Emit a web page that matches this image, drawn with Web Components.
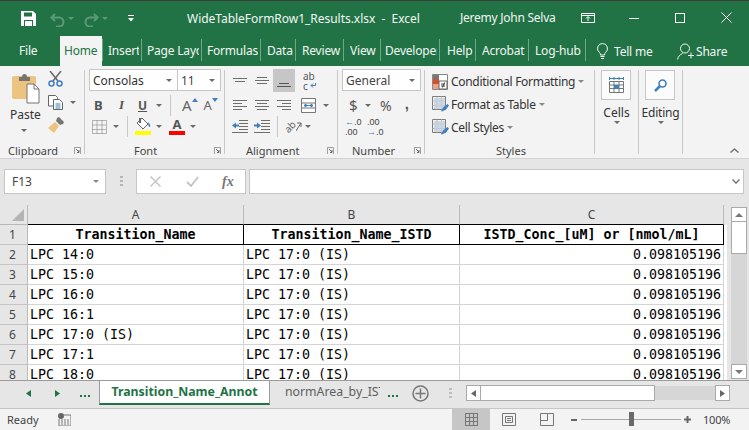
<!DOCTYPE html>
<html>
<head>
<meta charset="utf-8">
<style>
html, body { margin: 0; height: 430px; overflow: hidden; background: #f3f3f3; font-family: "Noto Sans", sans-serif; }
body { width: 749px; display: flex; flex-direction: column; }
</style>
</head>
<body>
<xl-titlebar></xl-titlebar>
<xl-tabstrip>
  <xl-tab w="60" pad="19" plain>File</xl-tab>
  <xl-tab w="42" pad="4" active>Home</xl-tab>
  <xl-tab w="40" pad="6">Insert</xl-tab>
  <xl-tab w="60" pad="5">Page Layout</xl-tab>
  <xl-tab w="59" pad="5">Formulas</xl-tab>
  <xl-tab w="35" pad="6">Data</xl-tab>
  <xl-tab w="48" pad="6">Review</xl-tab>
  <xl-tab w="37" pad="6">View</xl-tab>
  <xl-tab w="59" pad="4">Developer</xl-tab>
  <xl-tab w="36" pad="7">Help</xl-tab>
  <xl-tab w="53" pad="6">Acrobat</xl-tab>
  <xl-tab w="57" pad="6">Log-hub</xl-tab>
</xl-tabstrip>
<xl-ribbon></xl-ribbon>
<xl-formulabar></xl-formulabar>
<xl-sheet></xl-sheet>
<xl-sheettabs></xl-sheettabs>
<xl-statusbar></xl-statusbar>

<script>
// small icon set, everything drawn on its own box size
const svg = (w, h, body, extra = '') =>
  `<svg width="${w}" height="${h}" viewBox="0 0 ${w} ${h}" style="flex:none;display:block;${extra}">${body}</svg>`;
const caret = (ml = 0, c = '#6a6a6a') => svg(6, 3, `<path d="M0 0h6L3 3z" fill="${c}"/>`, `margin-left:${ml}px`);
const lines = (rows, c = '#6e6e6e') => rows.map(([x, y, w]) => `<rect x="${x}" y="${y}" width="${w}" height="1" fill="${c}"/>`).join('');
const launcher = svg(7, 7, '<path d="M0 .5h6.500V7M.5 0v7" fill="none" stroke="#a0a0a0"/><path d="M2 2l3 3M5 3v2.500H3" fill="none" stroke="#666"/>');

class Base extends HTMLElement {
  constructor() {
    super();
    this.attachShadow({ mode: 'open' });
  }
  render(css, html) {
    this.shadowRoot.innerHTML = `<style>${css}</style>${html}`;
  }
}

class XlTitlebar extends Base {
  constructor() {
    super();
    const undo = '<path d="M5 2L1.500 5.500 5 9M2 5.500h7a4.500 4.500 0 0 1 0 9H6" fill="none" stroke="#5b9a78" stroke-width="2"/>';
    const redo = '<path d="M10 2l3.500 3.500L10 9M13 5.500H6a4.500 4.500 0 0 0 0 9h3" fill="none" stroke="#5b9a78" stroke-width="2"/>';
    this.render(`
      :host { display: flex; flex: none; height: 36px; background: #217346; color: #f2f7f4; font-size: 12px; align-items: center; position: relative; box-sizing: border-box; border-top: 1px solid #3c3c3c; padding-left: 21px; }
      .t { white-space: pre; }
    `, `
      ${svg(15, 15, '<path d="M0 0h12l3 3v12H0z" fill="#fff"/><path d="M3 1.500h8v4H3zM3 9h9v6H3z" fill="#217346"/><path d="M4 10h7v5H4z" fill="#fff"/>', 'margin-top:-1px')}
      ${svg(15, 15, undo, 'margin-left:14px;margin-top:1px')}
      ${caret(3, '#5b9a78')}
      ${svg(15, 15, redo, 'margin-left:10px;margin-top:1px')}
      ${caret(3, '#5b9a78')}
      ${svg(6, 7, '<rect width="6" height="1" fill="#fff"/><path d="M0 3h6L3 6.500z" fill="#fff"/>', 'margin-left:20px')}
      <span class="t" style="margin-left:53px;width:273px;letter-spacing:-.03px">WideTableFormRow1_Results.xlsx  -  Excel</span>
      <span class="t" style="width:121px;letter-spacing:-.25px;margin-top:-2px">Jeremy John Selva</span>
      ${svg(14, 10, '<path d="M.5.500h13v9H.5zM.5 2.500h13M7 8V4M5 5.500L7 3.500 9 5.500" fill="none" stroke="#fff"/>', 'margin-top:-2px')}
      ${svg(10, 1, '<rect width="10" height="1" fill="#fff"/>', 'margin-left:34px;margin-top:-1px')}
      ${svg(10, 10, '<rect x=".5" y=".5" width="9" height="9" fill="none" stroke="#fff"/>', 'margin-left:36px;margin-top:-2px')}
      ${svg(11, 11, '<path d="M.5.500l10 10M10.500.500l-10 10" stroke="#fff" fill="none"/>', 'margin-left:36px;margin-top:-3px')}
    `);
  }
}

class XlTab extends Base {
  constructor() {
    super();
    const w = this.getAttribute('w'), pad = this.getAttribute('pad');
    this.render(`
      :host { display: block; flex: none; width: ${w}px; height: 30px; box-sizing: border-box; padding-left: ${pad}px; font-size: 12px; letter-spacing: -.2px; line-height: 29px; color: #f2f7f4; position: relative; white-space: nowrap; }
      .clip { overflow: hidden; height: 30px; margin-right: 3px; }
      :host([active]) { background: #f3f3f3; color: #217346; }
      :host(:not([plain]):not([active]))::after, :host([active])::after { content: ""; position: absolute; right: 0; top: 3px; height: 22px; width: 1px; background: #6ea88a; }
      :host([plain])::after { display: none; }
      :host([active])::after { right: -1px; }
    `, `<div class="clip"><slot></slot></div>`);
  }
}

class XlTabstrip extends Base {
  constructor() {
    super();
    this.render(`
      :host { display: flex; flex: none; height: 30px; background: #217346; color: #f2f7f4; font-size: 12px; line-height: 29px; }
      .tell { display: flex; align-items: center; letter-spacing: -.2px; }
    `, `
      <slot></slot>
      <div class="tell">
        ${svg(11, 16, '<path d="M5.500.500a5 5 0 0 1 3 9c-.8.7-1 1.500-1 2.500h-4c0-1-.2-1.800-1-2.500a5 5 0 0 1 3-9zM3.500 13.500h4M4 15.500h3" fill="none" stroke="#f2f7f4"/>', 'margin-left:11px;margin-top:-1px')}
        <span style="margin-left:6px;width:63px">Tell me</span>
        ${svg(17, 17, '<circle cx="8" cy="5.500" r="4.500" fill="none" stroke="#f2f7f4"/><path d="M.5 16.500c.5-3 2.500-5 5-6M11 12.500h6M14 9.500v6" fill="none" stroke="#f2f7f4"/>', 'margin-top:1px')}
        <span style="margin-left:2px">Share</span>
      </div>
    `);
  }
}

class XlGroup extends Base {
  constructor() {
    super();
    const w = this.getAttribute('w'), label = this.getAttribute('label') || '';
    const lx = this.getAttribute('lx') || 0;
    this.render(`
      :host { display: flex; flex-direction: column; flex: none; width: ${w}px; height: 92px; box-sizing: border-box; position: relative; }
      :host::after { content: ""; position: absolute; right: 0; top: 4px; bottom: 4px; width: 1px; background: #c9c9c9; }
      .body { flex: 1; min-height: 0; }
      .foot { display: flex; align-items: center; height: 16px; font-size: 11px; color: #444; white-space: nowrap; }
      .lab { margin-left: ${lx}px; }
      .launch { margin-left: auto; margin-right: 4px; margin-top: 1px; }
    `, `<div class="body"><slot></slot></div>
      <div class="foot"><span class="lab">${label}</span>${this.hasAttribute('launch') ? `<span class="launch">${launcher}</span>` : ''}</div>`);
  }
}

class XlRibbon extends Base {
  constructor() {
    super();
    const blue = '#3f7fbf';
    const top = lines([[0, 0, 14], [2, 3, 10]]), mid = lines([[2, 0, 10], [0, 3, 14], [2, 6, 10]]);
    const left = lines([[0, 0, 14], [0, 3, 9], [0, 6, 14], [0, 9, 9]]);
    const center = lines([[0, 0, 14], [2, 3, 10], [0, 6, 14], [2, 9, 10]]);
    const right = lines([[0, 0, 14], [5, 3, 9], [0, 6, 14], [5, 9, 9]]);
    const indL = lines([[7, 0, 9], [7, 3, 9], [7, 6, 9], [7, 9, 9], [0, 12, 16]]) + `<path d="M0 5.500l4-3v2h3v2H4v2z" fill="${blue}"/>`;
    const indR = lines([[7, 0, 9], [7, 3, 9], [7, 6, 9], [7, 9, 9], [0, 12, 16]]) + `<path d="M7 5.500l-4-3v2H0v2h3v2z" fill="${blue}"/>`;
    const sheetIco = (accent) => `<path d="M.5.500h13v13H.5z" fill="#f4f4f4" stroke="#7d7d7d"/><path d="M5 .5v13M9.500.5v13M.5 5h13M.5 9.500h13" stroke="#b5b5b5"/><path d="M2 2h11v11H2z" fill="#c4cfdd" opacity=".8"/>${accent}`;
    const brushMini = `<path d="M9 15l2.500-4 4-3 1.500 1.500-3 4-4 2z" fill="${blue}"/>`;
    this.render(`
      :host { display: flex; flex: none; height: 92px; background: #f3f3f3; border-bottom: 1px solid #d2d2d2; box-sizing: content-box; position: relative; font-size: 12px; color: #333; }
      .row { display: flex; align-items: center; }
      .combo { display: flex; align-items: center; box-sizing: border-box; height: 22px; background: #fff; border: 1px solid #c6c6c6; font-size: 12px; color: #444; padding-left: 3px; }
      .combo .c { margin-left: auto; margin-right: 5px; }
      .vs { width: 1px; height: 21px; background: #c9c9c9; flex: none; }
      .sq { display: flex; align-items: center; justify-content: center; box-sizing: border-box; width: 30px; height: 30px; border: 1px solid #c6c6c6; background: #fbfbfb; }
      .big { font-size: 12px; text-align: center; }
      .sty { display: flex; align-items: center; height: 23px; font-size: 12px; color: #333; white-space: nowrap; letter-spacing: -.3px; }
      .sty span { margin-left: 3px; }
      .wrap { margin-left: 8px; width: 14px; height: 20px; font-size: 10px; color: #555; }
      .wrap div { display: flex; align-items: center; height: 10px; line-height: 10px; }
      .orient { display: block; width: 13px; height: 13px; margin-left: 6px; font-size: 10px; line-height: 13px; color: #666; transform: rotate(-45deg); flex: none; }
      .collapse { position: absolute; right: 10px; bottom: 5px; }
    `, `
      <xl-group w="85" label="Clipboard" lx="8" launch>
        <div class="row" style="align-items:flex-start">
          <div style="width:44px">
            ${svg(28, 30, '<path d="M0 4q0-2 2-2h20q2 0 2 2v21H2q-2 0-2-2z" fill="#ecc47f"/><path d="M7 3h3q0-3 2.500-3t2.500 3h3v4H7z" fill="#757575"/><path d="M15 10h7l5 5v14H15z" fill="#fff" stroke="#757575"/><path d="M22 10v5h5" fill="none" stroke="#757575"/>', 'margin:8px 0 0 12px')}
            <div class="big" style="margin:4px 0 0 2px;padding-left:8px;text-align:left;line-height:14px">Paste</div>
            <div style="margin-top:7px">${caret(21)}</div>
          </div>
          <div style="margin-left:4px;margin-top:5px">
            ${svg(15, 16, `<path d="M2 0l8 10M13 0L5 10" stroke="#666" stroke-width="1.500" fill="none"/><circle cx="3.500" cy="12.500" r="2.500" fill="none" stroke="${blue}" stroke-width="1.500"/><circle cx="11.500" cy="12.500" r="2.500" fill="none" stroke="${blue}" stroke-width="1.500"/>`)}
            <div class="row" style="margin-top:8px">
              ${svg(15, 15, `<path d="M.5.500h7l2 2V11H.5z" fill="#fff" stroke="#666"/><path d="M5.500 4.500h6l3 3v7h-9z" fill="#fff" stroke="#666"/><path d="M7.500 9h5M7.500 11h5M7.500 13h5" stroke="${blue}"/>`)}
              ${caret(7)}
            </div>
            ${svg(16, 16, '<path d="M9 1l2-1 5 5-1 2-3 1-4-4z" fill="#757575"/><path d="M7 5l4 4-5 7-6-5z" fill="#ecc47f"/>', 'margin-top:7px')}
          </div>
        </div>
      </xl-group>

      <xl-group w="140" label="Font" lx="49" launch>
        <div class="row" style="margin:3px 0 0 4px">
          <div class="combo" style="width:88px;border-right:0"><span style="color:#333">Consolas</span><span class="c">${caret()}</span></div>
          <div class="combo" style="width:44px"><span>11</span><span class="c">${caret()}</span></div>
        </div>
        <div class="row" style="height:20px;margin-top:4px">
          <span style="margin-left:9px;font-weight:700;font-size:13px;color:#555;width:21px">B</span>
          <span style="font:italic 700 13px 'Liberation Serif',serif;color:#555;width:21px;padding-left:4px;box-sizing:border-box">I</span>
          <span style="font-weight:700;font-size:12px;color:#555;text-decoration:underline;width:21px;padding-left:2px;box-sizing:border-box">U</span>
          ${caret(-1)}
          <span class="vs" style="margin-left:8px"></span>
          <span style="font-size:15px;color:#666;margin-left:11px;line-height:20px">A</span>
          ${svg(6, 4, `<path d="M0 4l3-4 3 4z" fill="${blue}"/>`, 'margin-top:-11px')}
          <span style="font-size:13px;color:#666;margin-left:6px;line-height:20px">A</span>
          ${svg(6, 4, `<path d="M0 0h6L3 4z" fill="${blue}"/>`, 'margin-top:-11px')}
        </div>
        <div class="row" style="height:21px;margin-top:1px">
          ${svg(15, 14, '<path d="M.5.500h14v13H.5zM5 .5v13M10 .5v13M.5 5h14M.5 9.500h14" fill="none" stroke="#777" stroke-dasharray="1 1"/>', 'margin-left:7px')}
          ${caret(6)}
          <span class="vs" style="margin-left:8px"></span>
          <div style="margin-left:7px;width:16px;height:17px;display:flex;flex-direction:column;justify-content:space-between">
            ${svg(16, 12, `<path d="M7 0l6 6-5 5-6-6z" fill="#fff" stroke="#666"/><path d="M4 0h2v5H4z" fill="#666"/><path d="M13 4q3 3 2 5-2 0-2-5z" fill="${blue}"/>`)}
            <div style="height:4px;background:#ffff00"></div>
          </div>
          ${caret(5)}
          <div style="margin-left:7px;width:16px;height:17px;display:flex;flex-direction:column;justify-content:space-between;text-align:center">
            <span style="font-weight:700;font-size:13px;line-height:12px;color:#555">A</span>
            <div style="height:4px;background:#ff0000"></div>
          </div>
          ${caret(5)}
        </div>
      </xl-group>

      <xl-group w="113" label="Alignment" lx="21" launch>
        <div class="row" style="height:23px;margin-top:3px;margin-left:8px">
          ${svg(14, 5, top)}
          ${svg(14, 7, mid, 'margin-left:8px')}
          <div style="margin-left:4px;width:22px;height:23px;background:#c6c6c6;display:flex;align-items:flex-end;justify-content:center;padding-bottom:4px;box-sizing:border-box">${svg(14, 5, lines([[2, 0, 10], [0, 3, 14]], '#555'))}</div>
          <div class="wrap"><div>ab</div><div>c${svg(6, 5, `<path d="M5.500 0v2.500H1M3 .5L1 2.500l2 2" fill="none" stroke="${blue}"/>`, 'margin-left:2px')}</div></div>
        </div>
        <div class="row" style="height:20px;margin-top:3px;margin-left:8px">
          ${svg(14, 10, left)}
          ${svg(14, 10, center, 'margin-left:8px')}
          ${svg(14, 10, right, 'margin-left:8px')}
          ${svg(15, 15, `<path d="M.5.500h14v14H.5zM.5 5h14M.5 10h14" fill="#fff" stroke="#777"/><path d="M3 7.500h9M3 7.500l2-1.500v3zM12 7.500l-2-1.500v3z" fill="${blue}" stroke="${blue}"/>`, 'margin-left:10px')}
          ${caret(7)}
        </div>
        <div class="row" style="height:21px;margin-top:1px;margin-left:7px">
          ${svg(16, 13, indL)}
          ${svg(16, 13, indR, 'margin-left:6px')}
          <span class="vs" style="margin-left:7px"></span>
          <span class="orient">ab</span>
          ${svg(6, 11, '<path d="M0 10l5-8M5 2v4M5 2H1" fill="none" stroke="#666"/>', 'margin-left:-1px')}
          ${caret(3)}
        </div>
      </xl-group>

      <xl-group w="87" label="Number" lx="14" launch>
        <div class="combo" style="width:79px;margin:3px 0 0 4px"><span>General</span><span class="c">${caret()}</span></div>
        <div class="row" style="height:20px;margin-top:4px">
          <span style="font-size:15px;color:#555;margin-left:11px;width:10px">$</span>
          ${caret(6)}
          <span style="font-size:14px;color:#555;margin-left:9px">%</span>
          <span style="font:bold 15px 'Liberation Sans',sans-serif;color:#555;margin-left:13px;margin-top:-4px">,</span>
        </div>
        <div class="row" style="height:21px;margin-top:1px;font:9px/10px 'Liberation Sans',sans-serif;color:#444;letter-spacing:0">
          <div style="margin-left:7px;width:16px"><span style="color:${blue}">←</span>.0<br>.00</div>
          <div style="margin-left:6px;width:16px">.00<br><span style="color:${blue}">→</span>.0</div>
        </div>
      </xl-group>

      <xl-group w="170" label="Styles" lx="71">
        <div style="padding:4px 0 0 7px">
          <div class="sty">
            ${svg(16, 16, `<path d="M.5.500h15v15H.5z" fill="#fff" stroke="#888"/><path d="M1 1h6v4H1z" fill="#777"/><path d="M1 5h6v5H1z" fill="#d5502a"/><path d="M1 10h6v5H1z" fill="#e9a08a"/><path d="M7 7h8v8H7z" fill="#fff" stroke="#666"/><path d="M9 10h4M9 12h4M12.500 8.500l-2 5" stroke="#444" fill="none"/>`)}
            <span>Conditional Formatting</span>${caret(3, '#888')}
          </div>
          <div class="sty">
            ${svg(18, 17, sheetIco(brushMini))}
            <span style="margin-left:1px">Format as Table</span>${caret(3, '#888')}
          </div>
          <div class="sty">
            ${svg(18, 17, sheetIco(brushMini))}
            <span style="margin-left:1px">Cell Styles</span>${caret(3, '#888')}
          </div>
        </div>
      </xl-group>

      <xl-group w="44" label="">
        <div class="sq" style="margin:4px 0 0 6px">
          ${svg(15, 16, `<path d="M.5 1.500h14M.5 0v3M5 0v3M10 0v3M14.500 0v3" stroke="${blue}" fill="none"/><path d="M.5 4.500h14v11H.5zM.5 8h14M.5 11.500h14M5 4.500v11M10 4.500v11" fill="#fff" stroke="#777"/><rect x="5" y="8" width="5" height="4" fill="${blue}"/>`)}
        </div>
        <div class="big" style="margin-top:4px;margin-right:1px">Cells</div>
        ${caret(19)}
      </xl-group>

      <xl-group w="44" label="">
        <div class="sq" style="margin:4px 0 0 6px">
          ${svg(13, 13, `<circle cx="8.500" cy="4.500" r="3.500" fill="none" stroke="${blue}" stroke-width="1.600"/><path d="M6 7l-5 5" stroke="${blue}" stroke-width="2.500"/>`)}
        </div>
        <div class="big" style="margin-top:4px;margin-right:1px;letter-spacing:-.2px">Editing</div>
        ${caret(19)}
      </xl-group>
      <span class="collapse">${svg(9, 5, '<path d="M.5 4.500L4.500 1l4 3.500" fill="none" stroke="#777" stroke-width="1.500"/>')}</span>
    `);
  }
}

class XlFormulabar extends Base {
  constructor() {
    super();
    this.render(`
      :host { display: flex; flex: none; height: 46px; background: #e6e6e6; box-sizing: border-box; padding: 10px 0 0 4px; font-size: 12px; color: #444; }
      .box { box-sizing: border-box; height: 25px; background: #fff; border: 1px solid #c6c6c6; display: flex; align-items: center; }
    `, `
      <div class="box" style="width:102px;padding-left:7px"><span>F13</span><span style="margin-left:auto;margin-right:6px">${caret(0, '#888')}</span></div>
      ${svg(3, 11, '<path d="M0 0h3v2H0zM0 4h3v2H0zM0 8h3v2H0z" fill="#b5b5b5"/>', 'margin:7px 0 0 14px')}
      <div class="box" style="width:110px;margin-left:13px">
        ${svg(11, 11, '<path d="M.5.500l10 10M10.500.500l-10 10" stroke="#c6c6c6" stroke-width="1.500" fill="none"/>', 'margin-left:13px')}
        ${svg(13, 11, '<path d="M1 6l4 4 7-9" stroke="#c6c6c6" stroke-width="2" fill="none"/>', 'margin-left:25px')}
        <span style="font:italic 700 14px 'Liberation Serif',serif;color:#777;margin-left:23px">fx</span>
      </div>
      <div class="box" style="width:495px;margin-left:3px">
        ${svg(8, 5, '<path d="M.5.500l3.500 3.500L7.500.5" fill="none" stroke="#777" stroke-width="1.500"/>', 'margin-left:auto;margin-right:3px')}
      </div>
    `);
  }
}

class XlSheet extends Base {
  constructor() {
    super();
    const rows = ['LPC 14:0', 'LPC 15:0', 'LPC 16:0', 'LPC 16:1', 'LPC 17:0 (IS)', 'LPC 17:1', 'LPC 18:0'];
    const body = rows.map((name, i) => `
      <div class="rh">${i + 2}</div>
      <div class="c">${name}</div>
      <div class="c">LPC 17:0 (IS)</div>
      <div class="c num">0.098105196</div>
      <div class="gap"></div>`).join('');
    this.render(`
      :host { display: flex; flex: none; height: 175px; background: #fff; overflow: hidden; }
      .grid { display: grid; grid-template-columns: 28px 216px 216px 264px 3px; grid-auto-rows: 20px; width: 727px; font: 13.3px/19px "DejaVu Sans Mono", monospace; color: #000; }
      .ch, .corner { height: 20px; box-sizing: border-box; background: #e6e6e6; border-right: 1px solid #b9b9b9; border-bottom: 1px solid #000; font: 12px/19px "Noto Sans", sans-serif; text-align: center; color: #444; }
      .corner { border-bottom-color: #b9b9b9; display: flex; align-items: flex-end; padding: 0 0 3px 12px; }
      .rh { box-sizing: border-box; background: #e6e6e6; border-right: 1px solid #b9b9b9; border-bottom: 1px solid #c4c4c4; font: 12px/19px "Noto Sans", sans-serif; text-align: center; color: #444; padding-right: 2px; }
      .c { box-sizing: border-box; border-right: 1px solid #d4d4d4; border-bottom: 1px solid #d4d4d4; padding-left: 2px; white-space: pre; overflow: hidden; }
      .num { text-align: right; padding-right: 2px; }
      .h { font-weight: 700; text-align: center; border-right-color: #000; border-bottom-color: #000; padding: 0; }
      .gap { background: #fff; }
      .gap.g { background: #e6e6e6; }
      .sb { width: 22px; flex: none; background: #e6e6e6; box-sizing: border-box; padding: 2px 0 0 4px; display: flex; flex-direction: column; }
      .btn { box-sizing: border-box; width: 16px; height: 15px; background: #fff; border: 1px solid #a9a9a9; display: flex; align-items: center; justify-content: center; flex: none; }
      .track { flex: 1; width: 16px; background: #d6d6d6; }
      .thumb { box-sizing: border-box; width: 16px; height: 32px; background: #fff; border: 1px solid #a9a9a9; border-top: 0; }
    `, `
      <div class="grid">
        <div class="corner">${svg(12, 12, '<path d="M12 0v12H0z" fill="#b4b4b4"/>')}</div>
        <div class="ch">A</div><div class="ch">B</div><div class="ch">C</div><div class="gap g"></div>
        <div class="rh">1</div>
        <div class="c h">Transition_Name</div>
        <div class="c h">Transition_Name_ISTD</div>
        <div class="c h">ISTD_Conc_[uM] or [nmol/mL]</div>
        <div class="gap"></div>
        ${body}
      </div>
      <div class="sb">
        <div class="btn">${svg(8, 4, '<path d="M0 4l4-4 4 4z" fill="#777"/>')}</div>
        <div class="thumb"></div>
        <div class="track"></div>
        <div class="btn" style="margin-bottom:1px">${svg(8, 4, '<path d="M0 0h8L4 4z" fill="#777"/>')}</div>
      </div>
    `);
  }
}

class XlSheettabs extends Base {
  constructor() {
    super();
    const tri = (d) => svg(5, 7, `<path d="${d}" fill="#217346"/>`);
    const grayTri = (d) => svg(5, 7, `<path d="${d}" fill="#666"/>`);
    const dots = svg(10, 2, '<path d="M0 0h2v2H0zM4 0h2v2H4zM8 0h2v2H8z" fill="#217346"/>');
    this.render(`
      :host { display: flex; flex: none; height: 29px; box-sizing: border-box; background: #e6e6e6; border-top: 1px solid #9b9b9b; border-bottom: 1px solid #c6c6c6; font-size: 12.300px; position: relative; }
      .active { box-sizing: border-box; width: 171px; height: 25px; margin-top: -1px; margin-left: 9px; background: #fff; border: 1px solid #9b9b9b; border-bottom: 2px solid #217346; color: #217346; font-weight: 700; text-align: center; line-height: 22px; white-space: nowrap; }
      .other { width: 95px; margin-left: 15px; color: #5e5e5e; line-height: 21px; overflow: hidden; white-space: nowrap; }
      .nav { display: flex; align-items: center; height: 24px; }
      .btn { box-sizing: border-box; width: 15px; height: 16px; background: #fff; border: 1px solid #a9a9a9; display: flex; align-items: center; justify-content: center; flex: none; }
    `, `
      <div class="nav">
        <span style="margin-left:26px">${tri('M5 0v7L0 3.500z')}</span>
        <span style="margin-left:24px">${tri('M0 0v7l5-3.500z')}</span>
        <span style="margin-left:20px;margin-top:6px">${dots}</span>
      </div>
      <div class="active">Transition_Name_Annot</div>
      <div class="other">normArea_by_ISTD</div>
      <div class="nav">
        <span style="margin-left:8px;margin-top:6px">${dots}</span>
        ${svg(17, 17, '<circle cx="8.500" cy="8.500" r="7.500" fill="none" stroke="#777" stroke-width="1.500"/><path d="M3.500 8.500h10M8.500 3.500v10" stroke="#777" stroke-width="1.500"/>', 'margin-left:14px;margin-top:1px')}
        ${svg(3, 10, '<path d="M0 0h3v2H0zM0 4h3v2H0zM0 8h3v2H0z" fill="#bdbdbd"/>', 'margin-left:20px')}
        <div class="btn" style="margin-left:14px">${grayTri('M5 0v7L0 3.500z')}</div>
        <div style="box-sizing:border-box;width:174px;height:16px;background:#fff;border:1px solid #a9a9a9;border-left:0"></div>
        <div style="width:60px;height:14px;background:#d6d6d6"></div>
        <div class="btn">${grayTri('M0 0v7l5-3.500z')}</div>
      </div>
    `);
  }
}

class XlStatusbar extends Base {
  constructor() {
    super();
    const grid = lines([[0, 0, 13], [0, 4, 13], [0, 8, 13], [0, 12, 13]], '#777');
    this.render(`
      :host { display: flex; flex: 1; align-items: center; background: #f3f3f3; font-size: 11px; color: #444; }
      .view { display: flex; align-items: center; justify-content: center; height: 100%; }
    `, `
      <span style="margin-left:7px;width:51px">Ready</span>
      ${svg(13, 13, '<circle cx="3" cy="3" r="3" fill="#666"/><path d="M5 2h8v11H1V6" fill="none" stroke="#777"/><path d="M3 7h8M3 9h8M3 11h8" stroke="#777" stroke-dasharray="2 1"/>')}
      <span style="width:381px"></span>
      <div class="view" style="width:38px;background:#c6c6c6">
        ${svg(13, 13, grid + '<path d="M.5 0v13M4.500 0v13M8.500 0v13M12.500 0v13" stroke="#777"/>')}
      </div>
      <div class="view" style="width:12px"></div>
      ${svg(14, 13, '<path d="M.5.500h13v12H.5z" fill="none" stroke="#777"/><path d="M3.500 3.500h7v6h-7zM5 5.500h4M5 7.500h4" fill="none" stroke="#777"/>')}
      ${svg(14, 13, '<path d="M.5.500h13v12H.5zM.5 7.500h7V.5" fill="none" stroke="#777"/><path d="M7.500 .5v7" stroke="#777"/>', 'margin-left:24px')}
      ${svg(6, 2, '<rect width="6" height="2" fill="#666"/>', 'margin-left:17px')}
      <div style="position:relative;margin-left:4px;width:100px;height:1px;background:#a6a6a6">
        <div style="position:absolute;left:48px;top:-7px;width:5px;height:14px;background:#6a6a6a"></div>
      </div>
      ${svg(7, 7, '<path d="M0 2.500h7v2H0zM2.500 0h2v7h-2z" fill="#666"/>', 'margin-left:3px')}
      <span style="margin-left:12px;letter-spacing:-.2px">100%</span>
    `);
  }
}

customElements.define('xl-titlebar', XlTitlebar);
customElements.define('xl-tab', XlTab);
customElements.define('xl-tabstrip', XlTabstrip);
customElements.define('xl-group', XlGroup);
customElements.define('xl-ribbon', XlRibbon);
customElements.define('xl-formulabar', XlFormulabar);
customElements.define('xl-sheet', XlSheet);
customElements.define('xl-sheettabs', XlSheettabs);
customElements.define('xl-statusbar', XlStatusbar);
</script>
</body>
</html>
